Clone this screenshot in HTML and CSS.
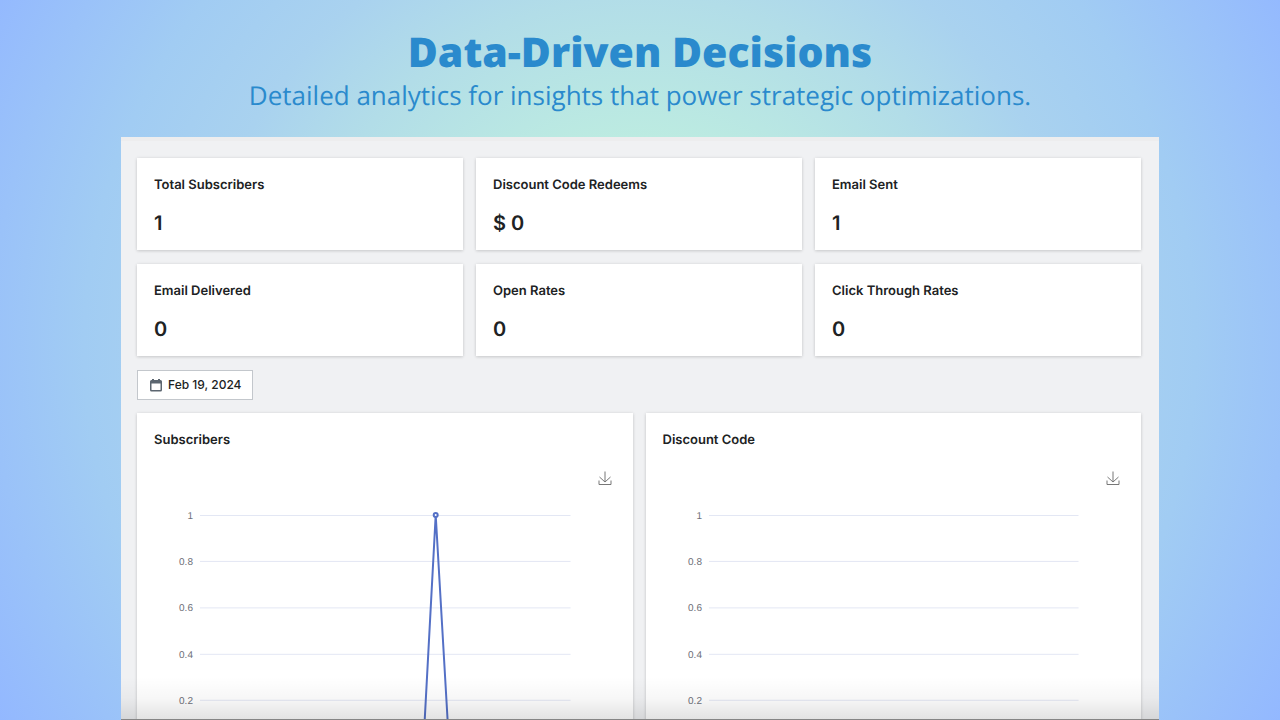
FILE: index.html
```html
<!DOCTYPE html>
<html lang="en">
<head>
<meta charset="utf-8">
<meta name="viewport" content="width=device-width, initial-scale=1">
<title>Data-Driven Decisions</title>
<link rel="stylesheet" href="styles.css">
</head>
<body>
<header class="hero">
  <h1 class="hero-title">Data-Driven Decisions</h1>
  <p class="hero-text">Detailed analytics for insights that power strategic optimizations.</p>
</header>
<main class="panel">
  <section class="stats">
    <article class="card"><h2 class="card-title">Total Subscribers</h2><p class="card-value">1</p></article>
    <article class="card"><h2 class="card-title">Discount Code Redeems</h2><p class="card-value">$ 0</p></article>
    <article class="card"><h2 class="card-title">Email Sent</h2><p class="card-value">1</p></article>
    <article class="card"><h2 class="card-title">Email Delivered</h2><p class="card-value">0</p></article>
    <article class="card"><h2 class="card-title">Open Rates</h2><p class="card-value">0</p></article>
    <article class="card"><h2 class="card-title">Click Through Rates</h2><p class="card-value">0</p></article>
  </section>
  <button class="date-button" type="button">
    <svg class="date-icon" viewBox="0 0 12 13" aria-hidden="true">
      <path fill="#5c6670" fill-rule="evenodd" d="M2 0h2v1h4V0h2v1h.5A1.500 1.500 0 0 1 12 2.500v8.500a1.500 1.500 0 0 1-1.500 1.500h-9A1.500 1.500 0 0 1 0 11V2.500A1.500 1.500 0 0 1 1.500 1H2zM1.500 4.500v6c0 .4.2.6.6.6h7.800c.4 0 .6-.2.6-.6v-6z"/>
    </svg>
    <span>Feb 19, 2024</span>
  </button>
  <section class="charts">
    <article class="card chart-card">
      <h2 class="card-title">Subscribers</h2>
      <button class="download" type="button" aria-label="Download Subscribers chart">
        <svg class="download-icon" viewBox="0 0 14 15" aria-hidden="true"><path d="M7 .5v10.500M1.500 6L7 11l5.500-5M1 9.500v4h12v-4"/></svg>
      </button>
      <svg class="chart" viewBox="0 0 496 270" role="img" aria-label="Subscribers line chart">
        <path class="grid-line" d="M63 16.500H434M63 62.500H434M63 109H434M63 155.500H434M63 201.500H434"/>
        <g class="axis-label"><text x="56" y="20">1</text><text x="56" y="66">0.8</text><text x="56" y="112">0.6</text><text x="56" y="159">0.4</text><text x="56" y="205">0.2</text></g>
        <path class="series" d="M287 240L299 16L312 240"/>
        <circle class="point" cx="299" cy="16" r="2"/>
      </svg>
    </article>
    <article class="card chart-card">
      <h2 class="card-title">Discount Code</h2>
      <button class="download" type="button" aria-label="Download Discount Code chart">
        <svg class="download-icon" viewBox="0 0 14 15" aria-hidden="true"><path d="M7 .5v10.500M1.500 6L7 11l5.500-5M1 9.500v4h12v-4"/></svg>
      </button>
      <svg class="chart" viewBox="0 0 496 270" role="img" aria-label="Discount Code line chart">
        <path class="grid-line" d="M63 16.500H433M63 62.500H433M63 109H433M63 155.500H433M63 201.500H433"/>
        <g class="axis-label"><text x="56" y="20">1</text><text x="56" y="66">0.8</text><text x="56" y="112">0.6</text><text x="56" y="159">0.4</text><text x="56" y="205">0.2</text></g>
      </svg>
    </article>
  </section>
</main>
</body>
</html>
```

FILE: styles.css
```css
* { box-sizing: border-box; }
body {
  margin: 0;
  height: 100vh;
  overflow: hidden;
  display: flex;
  flex-direction: column;
  font-family: Inter, "Liberation Sans", sans-serif;
  text-rendering: geometricPrecision;
  color: #202223;
  background: radial-gradient(circle farthest-corner at 50% 48%, #c1f4db 0%, #bcebe1 28%, #b2dde8 47%, #a9d2ef 60%, #a1ccf3 75%, #93b8ff 100%);
}
h1, h2, p { margin: 0; }
.hero {
  padding: 24px 20px 0;
  text-align: center;
  color: #2a8acd;
  font-family: "Open Sans", sans-serif;
}
.hero-title { font-size: 41px; line-height: 56px; font-weight: 800; }
.hero-text { font-size: 26px; line-height: 30px; font-weight: 400; }
.panel {
  position: relative;
  flex: 1;
  min-height: 0;
  margin: 27px 121px 0;
  padding: 17px 18px 0 16px;
  overflow: hidden;
  background: #f0f1f3;
  border-top: 4px solid #ededee;
}
.panel::after {
  content: "";
  position: absolute;
  inset: auto 0 0;
  height: 42px;
  border-bottom: 1px solid #858585;
  background: linear-gradient(rgba(0, 0, 0, 0), rgba(0, 0, 0, 0.03) 50%, rgba(0, 0, 0, 0.11));
  pointer-events: none;
}
.stats {
  display: grid;
  grid-template-columns: repeat(3, 1fr);
  gap: 14px 13px;
}
.card {
  padding: 17px;
  background: #fff;
  box-shadow: 0 0 4px rgba(23, 24, 24, 0.06), 0 1px 3px rgba(0, 0, 0, 0.14);
}
.stats .card { padding-bottom: 14px; }
.card-title { font-size: 13px; line-height: 20px; font-weight: 600; }
.card-value { margin-top: 15px; font-size: 20px; line-height: 26px; font-weight: 600; }
.date-button {
  display: flex;
  align-items: center;
  gap: 6px;
  height: 30px;
  margin: 14px 0 13px;
  padding: 0 11px 0 12px;
  border: 1px solid #c3c7cc;
  background: #fff;
  color: #202223;
  font: 500 12px/16px Inter, "Liberation Sans", sans-serif;
}
.date-icon { width: 12px; height: 13px; }
.charts {
  display: grid;
  grid-template-columns: repeat(2, 1fr);
  gap: 13px;
}
.chart-card { padding: 17px 0 0; }
.chart-card .card-title { padding-left: 17px; }
.download {
  display: block;
  margin: 21px 21px 0 auto;
  padding: 0;
  border: 0;
  background: none;
}
.download-icon { display: block; width: 14px; height: 15px; fill: none; stroke: #777; stroke-width: 1; }
.chart { display: block; width: 100%; margin-top: 13px; }
.grid-line { stroke: #e3e7f4; stroke-width: 1; }
.axis-label { font: 10px "Liberation Sans", sans-serif; fill: #6e7079; text-anchor: end; }
.series { fill: none; stroke: #5470c6; stroke-width: 2; }
.point { fill: #fff; stroke: #5470c6; stroke-width: 2; }
```
